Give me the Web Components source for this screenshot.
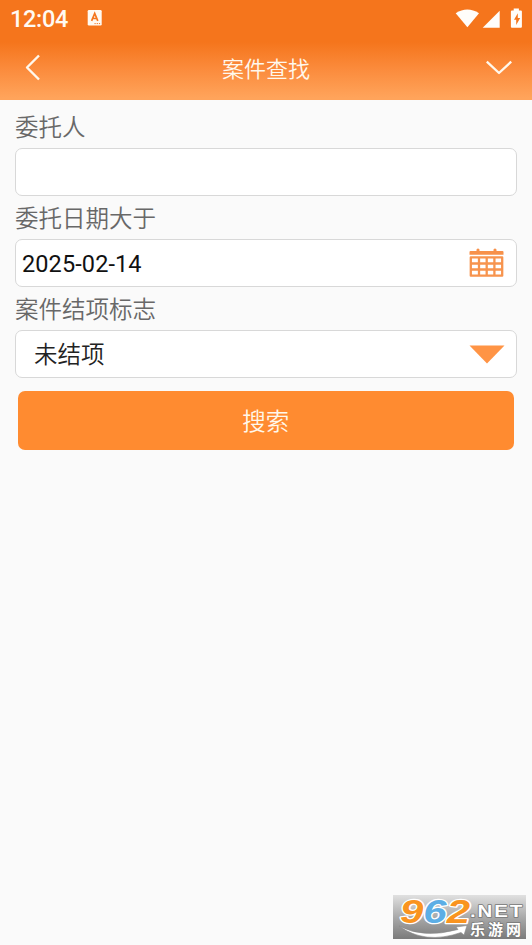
<!DOCTYPE html>
<html lang="zh-CN">
<head>
<meta charset="utf-8">
<title>案件查找</title>
<style>
html,body{margin:0;height:100%;background:#fafafa;overflow:hidden}
body{font-family:Roboto,"Noto Sans CJK SC",sans-serif}
</style>
</head>
<body>
<case-search-page></case-search-page>
<script>
const define = (name, html) => customElements.define(name, class extends HTMLElement {
  constructor() {
    super();
    const t = document.createElement('template');
    t.innerHTML = html;
    this.attachShadow({mode: 'open'}).append(t.content.cloneNode(true));
  }
});

define('status-bar', `
<style>
:host{display:flex;align-items:center;height:36px;padding:0 9px 0 10px;box-sizing:border-box;color:#fffaf2}
.time{font:500 23.5px/36px Roboto,sans-serif;width:77px;padding-top:1px;letter-spacing:-.3px}
svg{display:block}
.app{margin-top:-1px}
.right{margin-left:auto}
</style>
<span class="time">12:04</span>
<svg class="app" width="15" height="17" viewBox="0 0 15 17"><rect x=".7" y="1" width="14" height="15.5" rx="1.3" fill="#fffaf2"/><path d="M4.6 11.8 7.7 4.5l3.1 7.3M5.7 9.5h4" fill="none" stroke="#f5761d" stroke-width="1.7"/><path d="M7.5 14.6h1.2m1 0h1.2m1 0h1.2" stroke="#f5761d" stroke-width="1"/></svg>
<svg class="right" width="68" height="22" viewBox="455 6 68 22" fill="#fffdfa"><path d="M455.7 12.2Q467.3 4.7 479 12.2L467.4 26.2Z"/><path d="M499.7 9.7V26.7H482.7Z"/><path d="M513.7 7.4h5.2v2.2h2q1 0 1 1v15.2q0 1-1 1h-9q-1 0-1-1V10.6q0-1 1-1h1.8Z"/><path d="M517.8 12.3 514 18.7h2.2v5.3l4-7h-2.4Z" fill="#f5761d"/></svg>`);

define('title-bar', `
<style>
:host{display:grid;grid-template-columns:66px 1fr 66px;align-items:center;height:64px;color:#fff8ed}
h1{margin:0;text-align:center;font:350 22px/32px "Noto Sans CJK SC DemiLight","Noto Sans CJK SC",sans-serif;padding-bottom:2px}
svg{display:block}
</style>
<svg width="66" height="64" fill="none" stroke="#fff8ed" stroke-width="2.4" stroke-linejoin="round"><path d="M39 19.5 27 31.5 39 43.5"/></svg>
<h1><slot></slot></h1>
<svg width="66" height="64" fill="none" stroke="#fff8ed" stroke-width="2.3" stroke-linejoin="round"><path d="M20.8 25.7 33 37 45.2 25.7"/></svg>`);

define('form-field', `
<style>
:host{display:block;height:91px}
.label{height:48px;box-sizing:border-box;padding-top:9px;font:350 23.5px/34px "Noto Sans CJK SC DemiLight","Noto Sans CJK SC",sans-serif;color:#686868}
.box{display:flex;align-items:center;justify-content:space-between;height:48px;box-sizing:border-box;border:1.5px solid #d8d8d8;border-radius:7px;background:#fff;padding:0 12.5px 0 var(--inset,6px);font:350 23.5px/34px Roboto,"Noto Sans CJK SC DemiLight","Noto Sans CJK SC",sans-serif;color:var(--ink,#111)}
.value{padding-top:var(--drop,1px);font-weight:var(--weight,400);letter-spacing:var(--track,.1px)}
</style>
<div class="label"><slot name="label"></slot></div>
<div class="box"><span class="value"><slot></slot></span><slot name="icon"></slot></div>`);

define('calendar-icon', `
<style>:host{display:block;width:35px;height:30px}svg{display:block}</style>
<svg width="35" height="30" viewBox="0 0 35 30"><path d="M1.5 3H7.5V1.5q1.500-2 3 0V3h14V1.5q1.5-2 3 0V3h6q1 0 1 1V6.800H.5V4q0-1 1-1Z" fill="#f7914a"/><path d="M1.800 9.300h31.400v18.400H1.800ZM10 9v19M17.700 9v19M25.400 9v19M2 15.500h31M2 21.500h31" fill="none" stroke="#f7944e" stroke-width="2.300" stroke-linejoin="round"/></svg>`);

define('arrow-icon', `
<style>:host{display:block;width:36px;height:19px;margin-right:-1px}svg{display:block}</style>
<svg width="36" height="19"><path d="M.5.5h35L18 18.5Z" fill="#ff9445"/></svg>`);

define('search-button', `
<style>
:host{display:block;padding:0 3px 0 2.5px}
button{display:block;width:100%;height:59px;border:0;border-radius:7px;background:#ff8b30;color:#fff8eb;padding:0 0 1px;font:350 23.5px/34px "Noto Sans CJK SC DemiLight","Noto Sans CJK SC",sans-serif}
</style>
<button><slot></slot></button>`);

define('site-badge', `
<style>
:host{display:block;width:133px;height:44px}
svg{display:block;overflow:visible}
</style>
<svg width="133" height="44" viewBox="0 0 133 44">
<defs><linearGradient id="g" x2="0" y2="1"><stop stop-color="#e0e0e0"/><stop offset=".5" stop-color="#aaa"/><stop offset="1" stop-color="#7b7b7b"/></linearGradient></defs>
<rect width="133" height="44" fill="url(#g)"/>
<path d="M6 31Q30 44 65 34.5L63 32 74 30.5 71 40 68 37.5Q32 50 6 31Z" fill="#fff" stroke="#888" stroke-width=".6"/>
<g font-family="Liberation Sans,sans-serif" font-weight="700" paint-order="stroke" stroke-linejoin="round">
<text x="7" y="27.5" font-size="33" font-style="italic" textLength="70" lengthAdjust="spacingAndGlyphs" stroke="#fff" stroke-width="2.5"><tspan fill="#f99420">9</tspan><tspan fill="#5caee5">6</tspan><tspan fill="#f99420">2</tspan></text>
<text x="77" y="21.5" font-size="17" letter-spacing="1.5" textLength="54" lengthAdjust="spacingAndGlyphs" fill="#fff" stroke="#777" stroke-width="1.5">.NET</text>
<text x="77" y="39.5" font-family="Noto Sans CJK SC,sans-serif" font-size="15" textLength="51" fill="#fff" stroke="#777" stroke-width="1.5">乐游网</text>
</g></svg>`);

define('case-search-page', `
<style>
:host{display:flex;flex-direction:column;height:100vh;background:#fafafa}
header{height:100px;background:linear-gradient(#f5751c 0,#f5751c 42px,#fb8b3c 69px,#ffa45b 98px);flex:none}
main{padding:0 15px;flex:1}
search-button{margin-top:17.5px}
footer{display:flex;justify-content:flex-end;padding:0 6px 6px}
.pick{--inset:18px;--ink:#222;--drop:2px;--weight:350;--track:0}
</style>
<header><status-bar></status-bar><title-bar>案件查找</title-bar></header>
<main>
<form-field><span slot="label">委托人</span></form-field>
<form-field><span slot="label">委托日期大于</span>2025-02-14<calendar-icon slot="icon"></calendar-icon></form-field>
<form-field class="pick"><span slot="label">案件结项标志</span>未结项<arrow-icon slot="icon"></arrow-icon></form-field>
<search-button>搜索</search-button>
</main>
<footer><site-badge></site-badge></footer>`);
</script>
</body>
</html>
